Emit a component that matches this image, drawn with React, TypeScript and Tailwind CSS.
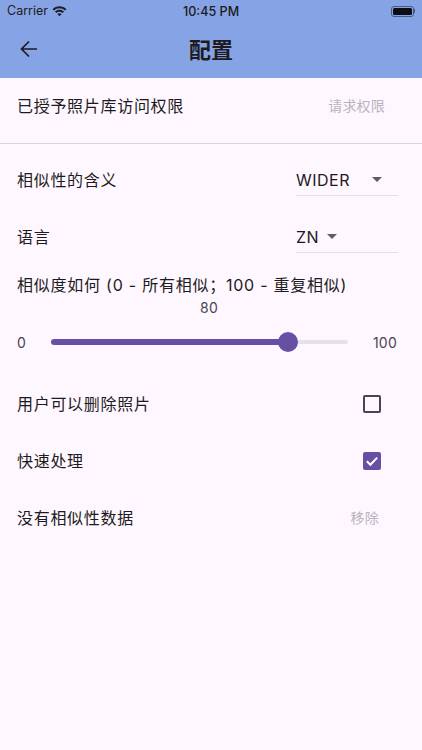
import React from "react";

const font = { fontFamily: '"Inter", "Noto Sans CJK SC", sans-serif' };

function Caret() {
  return <span className="block w-0 h-0 border-l-[5px] border-r-[5px] border-t-[5px] border-l-transparent border-r-transparent border-t-[#5f5d63]" />;
}

function Row({ label, right, className }: { label: string; right: React.ReactNode; className: string }) {
  return (
    <div className={`flex items-center justify-between pl-[17px] ${className}`}>
      <span className="text-[16px] leading-[24px] tracking-[0.7px] text-[#1d1b20]">{label}</span>
      {right}
    </div>
  );
}

function Select({ value, gap }: { value: string; gap: string }) {
  return (
    <div className="w-[102px] h-[32px] border-b border-[#e4e0e8] flex items-center">
      <span className={`text-[16px] tracking-[0.5px] text-[#1d1b20] ${gap}`}>{value}</span>
      <Caret />
    </div>
  );
}

export default function App() {
  return (
    <div className="w-[422px] h-[750px] bg-[#fef7ff] flex flex-col overflow-hidden" style={font}>
      <header className="bg-[#86a3e5] h-[78px] shrink-0 flex flex-col">
        <div className="h-[22px] flex items-center justify-between px-[7px] text-[#1d1b20] relative">
          <div className="flex items-center gap-[5px]">
            <span className="text-[12.5px] leading-[20px] font-['Inter']">Carrier</span>
            <svg width="15" height="12" viewBox="0 0 15 12" className="ml-[-1px] mt-[-1px]" fill="none">
              <path d="M0.6 4.2C4.5 0.4 10.5 0.4 14.4 4.2L13 5.6C9.8 2.6 5.2 2.6 2 5.6Z" fill="#1d1b20" />
              <path d="M3 6.6C5.6 4.2 9.4 4.2 12 6.6L10.6 8C8.8 6.4 6.2 6.4 4.4 8Z" fill="#1d1b20" />
              <path d="M5.3 9C6.6 7.9 8.4 7.9 9.7 9L7.5 11.3Z" fill="#1d1b20" />
            </svg>
          </div>
          <span className="absolute left-[183px] top-[1px] text-[12.6px] leading-[21px] font-medium font-['Inter']">10:45 PM</span>
          <div className="flex items-center">
            <div className="w-[23px] h-[11px] rounded-[3px] border border-[#4a5a80] p-[1px]">
              <div className="w-full h-full rounded-[1.5px] bg-[#0d0d12]" />
            </div>
            <div className="w-[1px] h-[4px] bg-[#4a5a80]" />
          </div>
        </div>
        <div className="flex-1 flex items-center justify-center relative">
          <svg className="absolute left-[17px] top-[15px]" width="24" height="24" viewBox="0 0 24 24" fill="none">
            <path d="M20 12H5M12 4.5L4.5 12L12 19.5" stroke="#1d1b20" strokeWidth="1.7" />
          </svg>
          <h1 className="text-[22px] leading-[28px] font-bold text-[#1d1b20] mt-[-1px]">配置</h1>
        </div>
      </header>

      <Row
        label="已授予照片库访问权限"
        className="h-[64px] pr-[37px] pb-[9px]"
        right={<span className="text-[14px] tracking-[0.2px] text-[#b8b4bb]">请求权限</span>}
      />
      <div className="h-[1px] bg-[#d8d5da] mt-[1px]" />

      <Row label="相似性的含义" className="h-[72px] pr-[24px]" right={<Select value="WIDER" gap="w-[76px]" />} />
      <Row label="语言" className="h-[48px] pr-[24px] mt-[-3px]" right={<Select value="ZN" gap="w-[31px]" />} />

      <div className="pl-[17px] text-[16px] leading-[24px] tracking-[0.76px] text-[#1d1b20] mt-[12px]">相似度如何 (0 - 所有相似；100 - 重复相似)</div>
      <div className="text-center text-[14px] leading-[20px] tracking-[0.25px] text-[#49454f] pr-[4px] mt-[1px]">80</div>
      <div className="flex items-center h-[24px] mt-[12px] pl-[17px] pr-[25px] text-[14px] text-[#49454f] tracking-[0.25px]">
        <span className="w-[34px]">0</span>
        <div className="relative w-[297px] h-[4px] rounded-full bg-[#e6e0e9]">
          <div className="absolute left-0 top-[-1px] h-[6px] w-[237px] rounded-full bg-[#6750a4]" />
          <div className="absolute left-[227px] top-[-8px] w-[20px] h-[20px] rounded-full bg-[#6750a4]" />
        </div>
        <span className="ml-auto">100</span>
      </div>

      <Row
        label="用户可以删除照片"
        className="h-[57px] pr-[41px] mt-[21px]"
        right={<span className="w-[18px] h-[18px] rounded-[2px] border-2 border-[#49454f]" />}
      />
      <Row
        label="快速处理"
        className="h-[57px] pr-[41px]"
        right={
          <span className="w-[18px] h-[18px] rounded-[2px] bg-[#6750a4] flex items-center justify-center">
            <svg width="14" height="14" viewBox="0 0 14 14" fill="none">
              <path d="M1.8 7.2L5.4 10.8L12.2 3.6" stroke="white" strokeWidth="2" />
            </svg>
          </span>
        }
      />
      <Row
        label="没有相似性数据"
        className="h-[57px] pr-[43px]"
        right={<span className="text-[14px] tracking-[0.2px] text-[#b8b4bb]">移除</span>}
      />
    </div>
  );
}
